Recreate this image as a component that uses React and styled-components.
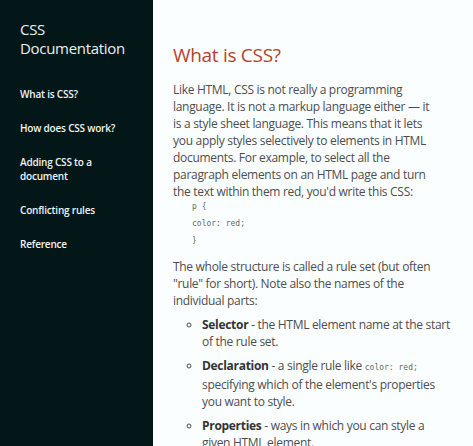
import React from 'react';
import styled, { createGlobalStyle } from 'styled-components';

const GlobalStyle = createGlobalStyle`
  html, body {
    margin: 0;
    padding: 0;
    background: #fbfefe;
    font-family: 'Open Sans', 'Liberation Sans', sans-serif;
  }
`;

const Page = styled.div`
  display: flex;
  min-height: 100vh;
`;

const Sidebar = styled.nav`
  flex: 0 0 153px;
  width: 153px;
  height: 100vh;
  position: sticky;
  top: 0;
  background: #041718;
  padding: 20px 20px;
  box-sizing: border-box;
`;

const Title = styled.h1`
  margin: 0 0 29px;
  font-size: 15px;
  font-weight: 400;
  letter-spacing: -0.3px;
  line-height: 19px;
  color: #e8f0f0;
`;

const NavList = styled.ul`
  list-style: none;
  margin: 0;
  padding: 0;
  display: flex;
  flex-direction: column;
  gap: 20px;
`;

const NavLink = styled.a`
  display: block;
  color: #eef4f4;
  text-decoration: none;
  font-size: 10px;
  font-weight: 600;
  line-height: 14px;
  letter-spacing: -0.2px;
`;

const Main = styled.main`
  flex: 1;
  padding: 40px 19px 20px 20px;
  color: #4d4d4d;
  font-size: 12px;
  letter-spacing: -0.3px;
  line-height: 17px;
`;

const Heading = styled.h2`
  margin: 0 0 11px;
  font-size: 19px;
  font-weight: 400;
  letter-spacing: -0.3px;
  line-height: 30px;
  color: #b5412b;
`;

const Para = styled.p`
  max-width: 263px;
  margin: 0 0 ${(p) => p.$gap}px;
`;

const Code = styled.pre`
  margin: 0 0 9px;
  padding-left: 19px;
  font-family: 'DejaVu Sans Mono', 'Liberation Mono', monospace;
  font-size: 8px;
  letter-spacing: 0;
  line-height: 17px;
  color: #666;
`;

const InlineCode = styled.code`
  font-family: 'DejaVu Sans Mono', 'Liberation Mono', monospace;
  font-size: 8px;
  letter-spacing: 0;
  color: #666;
`;

const List = styled.ul`
  margin: 0;
  padding-left: 29px;
  list-style: circle;
`;

const Item = styled.li`
  margin-bottom: 7px;
  &::marker {
    font-size: 11px;
  }
`;

const Term = styled.strong`
  font-weight: 700;
  color: #333;
`;

const links = [
  'What is CSS?',
  'How does CSS work?',
  'Adding CSS to a document',
  'Conflicting rules',
  'Reference',
];

export default function App() {
  return (
    <>
      <GlobalStyle />
      <Page>
        <Sidebar>
          <Title>CSS Documentation</Title>
          <NavList>
            {links.map((l) => (
              <li key={l}>
                <NavLink href="#">{l}</NavLink>
              </li>
            ))}
          </NavList>
        </Sidebar>
        <Main>
          <Heading>What is CSS?</Heading>
          <Para $gap={-2}>
            Like HTML, CSS is not really a programming language. It is not a markup
            language either — it is a style sheet language. This means that it lets you
            apply styles selectively to elements in HTML documents. For example, to
            select all the paragraph elements on an HTML page and turn the text within
            them red, you'd write this CSS:
          </Para>
          <Code>{`p {
color: red;
}`}</Code>
          <Para $gap={7}>
            The whole structure is called a rule set (but often "rule" for short). Note
            also the names of the individual parts:
          </Para>
          <List>
            <Item>
              <Term>Selector</Term> - the HTML element name at the start of the rule set.
            </Item>
            <Item>
              <Term>Declaration</Term> - a single rule like <InlineCode>color: red;</InlineCode>{' '}
              specifying which of the element's properties you want to style.
            </Item>
            <Item>
              <Term>Properties</Term> - ways in which you can style a given HTML element.
            </Item>
          </List>
        </Main>
      </Page>
    </>
  );
}
